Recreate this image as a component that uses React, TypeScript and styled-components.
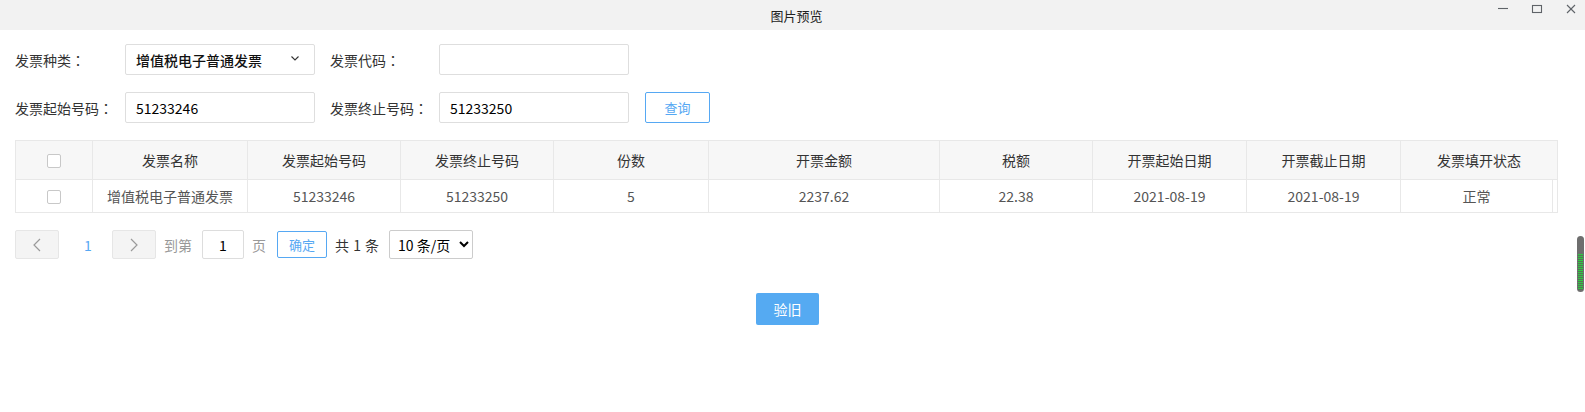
import React from 'react';
import styled, { createGlobalStyle } from 'styled-components';

const BLUE = '#56a8f3';

const columns = [
  { key: 'check', width: 77 },
  { key: 'name', title: '发票名称', width: 155 },
  { key: 'start', title: '发票起始号码', width: 153 },
  { key: 'end', title: '发票终止号码', width: 153 },
  { key: 'count', title: '份数', width: 155 },
  { key: 'amount', title: '开票金额', width: 231 },
  { key: 'tax', title: '税额', width: 153 },
  { key: 'startDate', title: '开票起始日期', width: 154 },
  { key: 'endDate', title: '开票截止日期', width: 154 },
  { key: 'status', title: '发票填开状态', width: 152 },
];

const rows = [
  {
    name: '增值税电子普通发票',
    start: '51233246',
    end: '51233250',
    count: '5',
    amount: '2237.62',
    tax: '22.38',
    startDate: '2021-08-19',
    endDate: '2021-08-19',
    status: '正常',
  },
];

export default function App() {
  return (
    <>
      <GlobalStyle />
      <Window>
        <TitleBar>
          <span />
          <Title>图片预览</Title>
          <Controls>
            <ControlIcon viewBox="0 0 12 12">
              <line x1="1" y1="5.5" x2="11" y2="5.5" />
            </ControlIcon>
            <ControlIcon viewBox="0 0 12 12">
              <rect x="1.5" y="2.5" width="9" height="7" />
            </ControlIcon>
            <ControlIcon viewBox="0 0 12 12">
              <line x1="2" y1="2" x2="10" y2="10" />
              <line x1="10" y1="2" x2="2" y2="10" />
            </ControlIcon>
          </Controls>
        </TitleBar>

        <Content>
          <FormRow>
            <Label>发票种类<Colon>：</Colon></Label>
            <Field>
              <SelectText>增值税电子普通发票</SelectText>
              <Chevron viewBox="0 0 8 5">
                <polyline points="0.5,0.5 4,4 7.5,0.5" />
              </Chevron>
            </Field>
            <Label $second>发票代码<Colon>：</Colon></Label>
            <Field />
          </FormRow>
          <FormRow>
            <Label>发票起始号码<Colon>：</Colon></Label>
            <Field>51233246</Field>
            <Label $second>发票终止号码<Colon>：</Colon></Label>
            <Field>51233250</Field>
            <OutlineButton>查询</OutlineButton>
          </FormRow>

          <Table>
            <colgroup>
              {columns.map(c => (
                <col key={c.key} style={{ width: c.width }} />
              ))}
              <col style={{ width: 5 }} />
            </colgroup>
            <thead>
              <tr>
                {columns.map((c, i) => (
                  <Th key={c.key} colSpan={i === columns.length - 1 ? 2 : 1}>
                    {c.key === 'check' ? <Checkbox /> : c.title}
                  </Th>
                ))}
              </tr>
            </thead>
            <tbody>
              {rows.map((r, ri) => (
                <tr key={ri}>
                  <Td>
                    <Checkbox />
                  </Td>
                  <Td>{r.name}</Td>
                  <Td>{r.start}</Td>
                  <Td>{r.end}</Td>
                  <Td>{r.count}</Td>
                  <Td>{r.amount}</Td>
                  <Td>{r.tax}</Td>
                  <Td>{r.startDate}</Td>
                  <Td>{r.endDate}</Td>
                  <Td>{r.status}</Td>
                  <Gutter />
                </tr>
              ))}
            </tbody>
          </Table>

          <Pager>
            <PageArrow>
              <ArrowIcon viewBox="0 0 8 14">
                <polyline points="7,1 1,7 7,13" />
              </ArrowIcon>
            </PageArrow>
            <PageNum>1</PageNum>
            <PageArrow>
              <ArrowIcon viewBox="0 0 8 14">
                <polyline points="1,1 7,7 1,13" />
              </ArrowIcon>
            </PageArrow>
            <PagerText>到第</PagerText>
            <JumpInput defaultValue="1" />
            <PagerText>页</PagerText>
            <ConfirmButton>确定</ConfirmButton>
            <Total>共 1 条</Total>
            <SizeSelect defaultValue="10">
              <option value="10">10 条/页</option>
              <option value="20">20 条/页</option>
            </SizeSelect>
          </Pager>

          <Footer>
            <PrimaryButton>验旧</PrimaryButton>
          </Footer>
        </Content>

        <ScrollThumb />
      </Window>
    </>
  );
}

const GlobalStyle = createGlobalStyle`
  html, body {
    margin: 0;
    padding: 0;
    background: #fff;
    overflow: hidden;
  }
  body {
    font-family: "Noto Sans CJK SC", "Noto Sans", sans-serif;
    font-size: 14px;
    color: #333;
  }
`;

const Window = styled.div`
  position: relative;
  width: 100%;
  height: 412px;
  background: #fff;
  overflow: hidden;
`;

const TitleBar = styled.div`
  height: 30px;
  background: #f2f2f2;
  display: grid;
  grid-template-columns: 1fr auto 1fr;
  align-items: center;
`;

const Title = styled.div`
  font-size: 13px;
  color: #222;
  margin-left: 8px;
`;

const Controls = styled.div`
  display: flex;
  justify-content: flex-end;
  align-items: flex-start;
  padding: 3px 8px 0 0;
  gap: 22px;
  height: 100%;
  box-sizing: border-box;
`;

const ControlIcon = styled.svg`
  width: 12px;
  height: 12px;
  fill: none;
  stroke: #5f6368;
  stroke-width: 1.1;
`;

const Content = styled.div`
  width: 1542px;
  padding: 14px 0 0 15px;
  display: flex;
  flex-direction: column;
`;

const FormRow = styled.div`
  display: flex;
  align-items: center;
  height: 31px;
  margin-bottom: 17px;
`;

const Label = styled.div<{ $second?: boolean }>`
  width: ${p => (p.$second ? '109px' : '110px')};
  margin-left: ${p => (p.$second ? '15px' : '0')};
  font-size: 14px;
  color: #333;
  white-space: nowrap;
`;

const Colon = styled.span`
  font-family: "Noto Sans CJK TC", "Noto Sans CJK SC", sans-serif;
`;

const Field = styled.div`
  box-sizing: border-box;
  width: 190px;
  height: 31px;
  border: 1px solid #dedede;
  border-radius: 2px;
  padding: 0 15px 0 10px;
  display: flex;
  align-items: center;
  justify-content: space-between;
  font-size: 14px;
  color: #000;
  background: #fff;
`;

const SelectText = styled.span`
  font-size: 14px;
  font-weight: 500;
  color: #111;
`;

const Chevron = styled.svg`
  width: 8px;
  height: 5px;
  fill: none;
  stroke: #333;
  stroke-width: 1.1;
  margin-top: -3px;
`;

const OutlineButton = styled.button`
  box-sizing: border-box;
  margin-left: 16px;
  width: 65px;
  height: 31px;
  border: 1px solid ${BLUE};
  border-radius: 2px;
  background: #fff;
  color: ${BLUE};
  font-family: inherit;
  font-size: 13px;
  cursor: pointer;
`;

const Table = styled.table`
  width: 1542px;
  table-layout: fixed;
  border-collapse: collapse;
  border: 1px solid #e8e8e8;
  font-size: 14px;
`;

const Th = styled.th`
  height: 38px;
  padding: 0;
  background: #f7f7f7;
  border: 1px solid #e8e8e8;
  font-weight: normal;
  color: #333;
  text-align: center;
  vertical-align: middle;
`;

const Td = styled.td`
  height: 32px;
  padding: 0;
  border: 1px solid #e8e8e8;
  color: #555;
  text-align: center;
  vertical-align: middle;
`;

const Gutter = styled.td`
  padding: 0;
  border-top: 1px solid #e8e8e8;
  border-bottom: 1px solid #e8e8e8;
`;

const Checkbox = styled.span`
  display: inline-block;
  box-sizing: border-box;
  width: 14px;
  height: 14px;
  border: 1px solid #c8c8c8;
  border-radius: 2px;
  background: #fff;
  vertical-align: middle;
  margin-top: -2px;
`;

const Pager = styled.div`
  display: flex;
  align-items: center;
  height: 29px;
  margin-top: 17px;
`;

const PageArrow = styled.div`
  box-sizing: border-box;
  width: 44px;
  height: 29px;
  background: #f4f4f4;
  border: 1px solid #e6e6e6;
  border-radius: 2px;
  display: flex;
  align-items: center;
  justify-content: center;
`;

const ArrowIcon = styled.svg`
  width: 8px;
  height: 14px;
  fill: none;
  stroke: #9a9a9a;
  stroke-width: 1.2;
`;

const PageNum = styled.div`
  box-sizing: border-box;
  width: 53px;
  padding-left: 5px;
  text-align: center;
  color: ${BLUE};
  font-size: 14px;
`;

const PagerText = styled.span`
  color: #999;
  font-size: 14px;
  margin: 0 10px 0 8px;
`;

const JumpInput = styled.input`
  box-sizing: border-box;
  width: 42px;
  height: 29px;
  border: 1px solid #ddd;
  border-radius: 2px;
  text-align: center;
  font-family: inherit;
  font-size: 14px;
  color: #000;
  padding: 0;
  outline: none;
`;

const ConfirmButton = styled.button`
  box-sizing: border-box;
  width: 50px;
  height: 27px;
  border: 1px solid ${BLUE};
  border-radius: 2px;
  background: #fff;
  color: ${BLUE};
  font-family: inherit;
  font-size: 13px;
  padding: 0;
  margin-left: 1px;
  cursor: pointer;
`;

const Total = styled.span`
  color: #333;
  font-size: 14px;
  margin: 0 10px 0 8px;
  word-spacing: 1px;
`;

const SizeSelect = styled.select`
  box-sizing: border-box;
  width: 84px;
  height: 29px;
  border: 1px solid #ccc;
  border-radius: 2px;
  background: #fff;
  font-family: inherit;
  font-size: 14px;
  color: #000;
  padding: 0 2px 0 4px;
`;

const Footer = styled.div`
  display: flex;
  justify-content: center;
  padding-left: 3px;
  margin-top: 34px;
`;

const PrimaryButton = styled.button`
  width: 63px;
  height: 32px;
  border: none;
  border-radius: 2px;
  background: #55aaf2;
  color: #fff;
  font-family: inherit;
  font-size: 14px;
  cursor: pointer;
`;

const ScrollThumb = styled.div`
  position: absolute;
  right: 1px;
  top: 236px;
  width: 7px;
  height: 56px;
  border-radius: 4px;
  background:
    repeating-linear-gradient(
      to bottom,
      #2ecc40 0px,
      #2ecc40 1px,
      #5c6b5c 1px,
      #5c6b5c 2px
    ) 1px 18px / 5px 36px no-repeat,
    #6e6e6e;
`;
